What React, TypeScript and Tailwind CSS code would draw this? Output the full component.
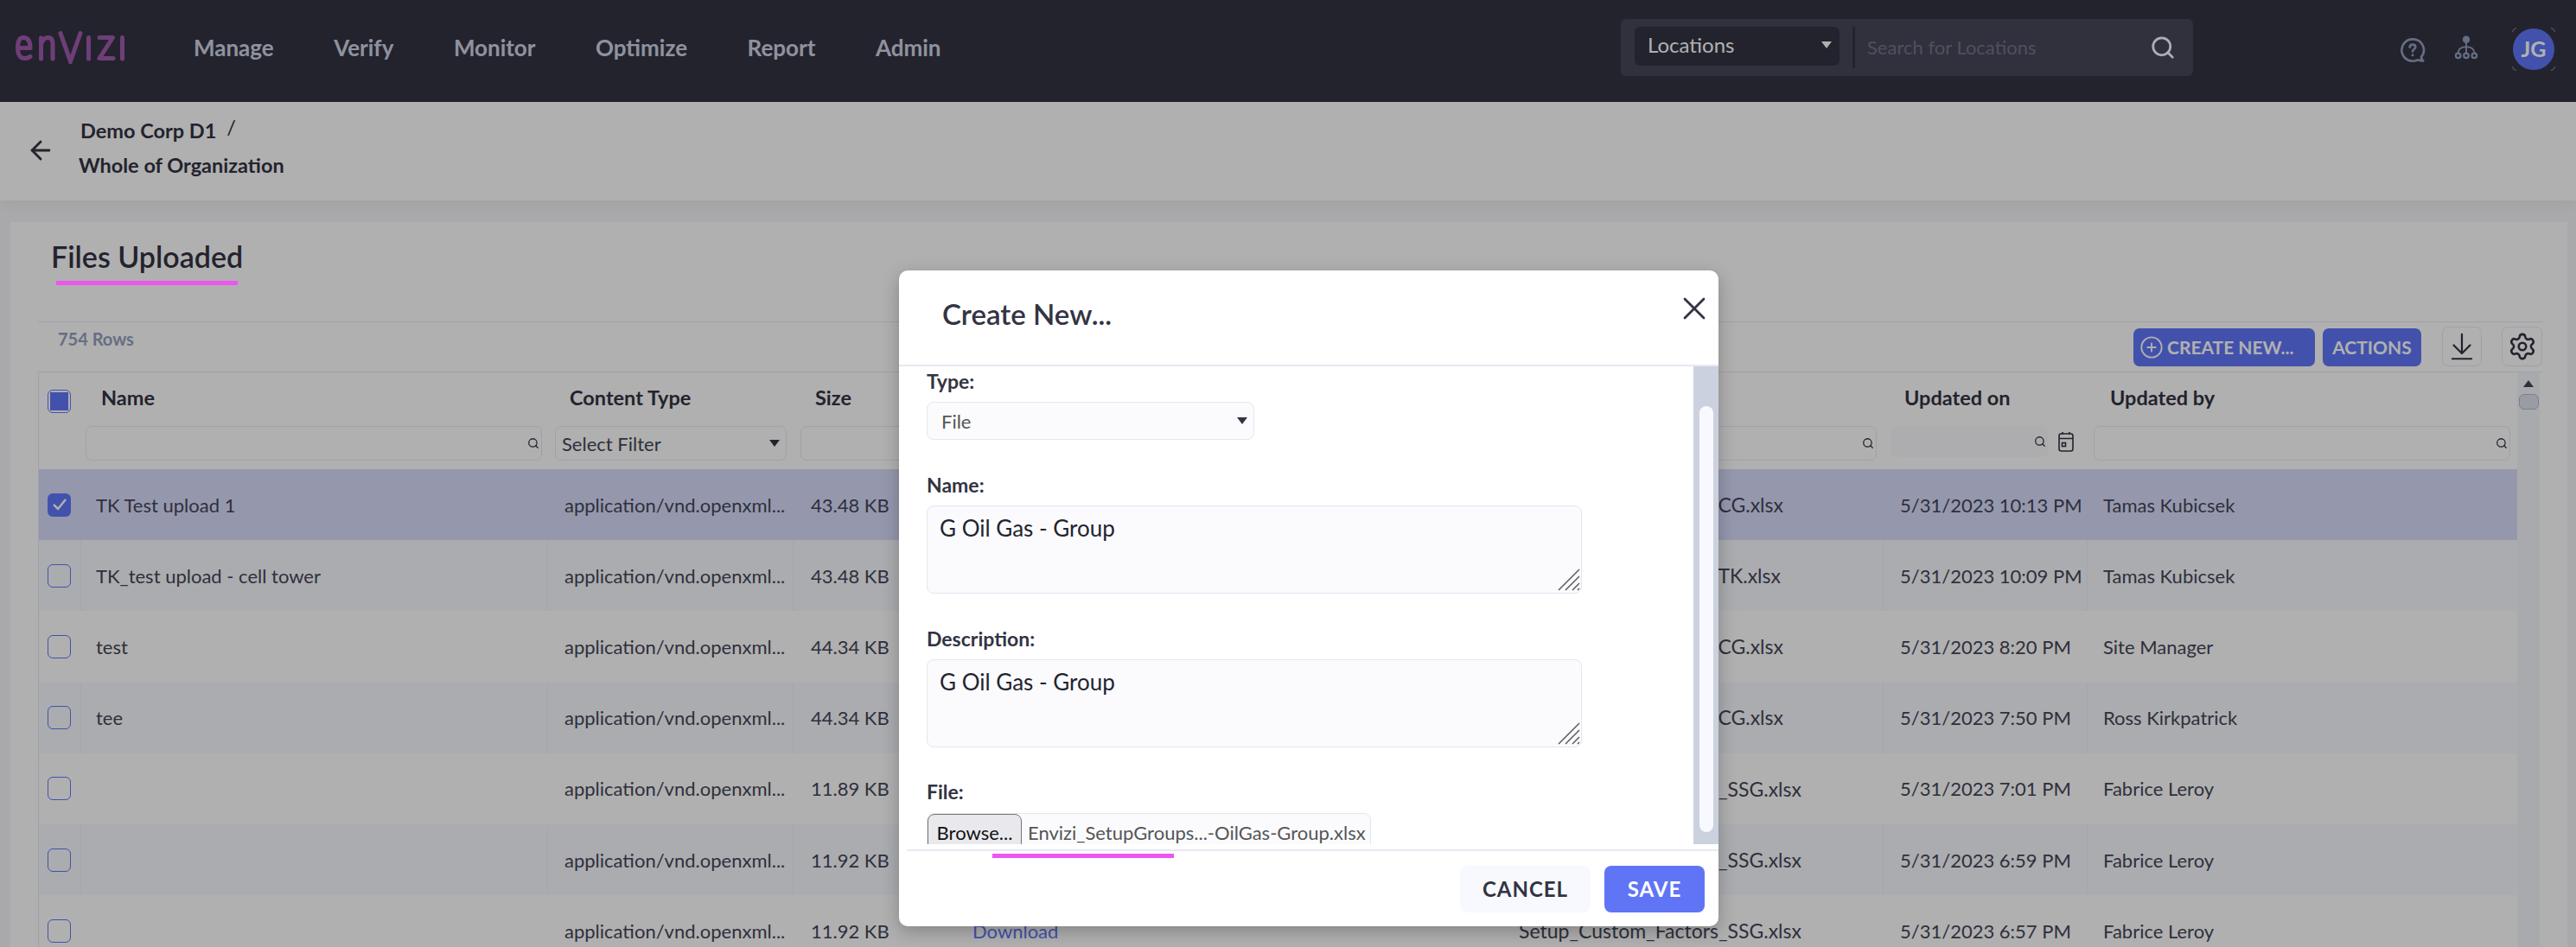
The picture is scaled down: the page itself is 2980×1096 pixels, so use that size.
import React from 'react';
import { ArrowDownToLine, ArrowLeft, CirclePlus, Search, Settings, X } from 'lucide-react';

const cols = 'grid grid-cols-[49px_540px_284px_193px_631px_437px_236px_498px]';

const rows = [
  { name: 'TK Test upload 1', size: '43.48 KB', file: 'Setup_Groups_OilGas_CG.xlsx', on: '5/31/2023 10:13 PM', by: 'Tamas Kubicsek', selected: true },
  { name: 'TK_test upload - cell tower', size: '43.48 KB', file: 'Setup_Groups_OilGas_TK.xlsx', on: '5/31/2023 10:09 PM', by: 'Tamas Kubicsek' },
  { name: 'test', size: '44.34 KB', file: 'Setup_Groups_OilGas_CG.xlsx', on: '5/31/2023 8:20 PM', by: 'Site Manager' },
  { name: 'tee', size: '44.34 KB', file: 'Setup_Groups_OilGas_CG.xlsx', on: '5/31/2023 7:50 PM', by: 'Ross Kirkpatrick' },
  { name: '', size: '11.89 KB', file: 'Setup_Custom_Factors_SSG.xlsx', on: '5/31/2023 7:01 PM', by: 'Fabrice Leroy' },
  { name: '', size: '11.92 KB', file: 'Setup_Custom_Factors_SSG.xlsx', on: '5/31/2023 6:59 PM', by: 'Fabrice Leroy' },
  { name: '', size: '11.92 KB', file: 'Setup_Custom_Factors_SSG.xlsx', on: '5/31/2023 6:57 PM', by: 'Fabrice Leroy' },
];

function Logo() {
  return (
    <svg className="mb-[8px]" width="127" height="38" viewBox="0 0 127 38" fill="none" stroke="#a15bae" strokeWidth="5" strokeLinecap="round" strokeLinejoin="round">
      <path d="M2.500 19.500H17c0-8-3-12-8-12S2.500 12 2.500 19.500s3 12 8 12c3 0 5-.8 6.500-2" />
      <path d="M29.500 32V8M29.500 15c2-5 5-7.500 8-7.500 4 0 5.500 3 5.500 7V32" />
      <path d="M52 2.500L63.500 35 75 2.500" strokeLinecap="round" strokeLinejoin="miter" />
      <path d="M84.500 7.500V32" />
      <path d="M97 7.500h15.500L97 31.500h16" />
      <path d="M123.500 7.500V32" />
    </svg>
  );
}

function HelpIcon() {
  return (
    <svg className="mb-[3px]" width="30" height="30" viewBox="0 0 32 32" fill="none" stroke="#94a0c0" strokeWidth="2.800">
      <path d="M16 2.500a13.500 13.500 0 1 0 6 25.600c2 .6 5 1.400 7 1.200-1-1-2.200-2.600-2.400-4.600A13.500 13.500 0 0 0 16 2.500z" strokeLinejoin="round" />
      <path d="M12.500 12.500c0-2 1.500-3.300 3.500-3.300s3.500 1.300 3.500 3.100c0 2.600-3.500 2.800-3.500 5.400" strokeLinecap="round" />
      <circle cx="16" cy="22" r="1.600" fill="#94a0c0" stroke="none" />
    </svg>
  );
}

function HierarchyIcon() {
  return (
    <svg className="mb-[8px]" width="28" height="28" viewBox="0 0 30 30" fill="none" stroke="#94a0c0" strokeWidth="2">
      <circle cx="15" cy="5" r="4.500" fill="#94a0c0" stroke="none" />
      <path d="M15 8v15M5 22c0-5 4-8 10-8s10 3 10 8" />
      <circle cx="5" cy="25" r="3" fill="#333443" strokeWidth="2.400" />
      <circle cx="15" cy="25" r="3" fill="#333443" strokeWidth="2.400" />
      <circle cx="25" cy="25" r="3" fill="#333443" strokeWidth="2.400" />
    </svg>
  );
}

function CalendarIcon() {
  return (
    <svg width="18" height="24" viewBox="0 0 18 24" fill="none" stroke="#333443" strokeWidth="1.600">
      <rect x="1" y="3" width="16" height="20" rx="2.500" />
      <path d="M1 8.500h16M5 1v3M13 1v3" />
      <rect x="4.500" y="13.500" width="4" height="4" />
    </svg>
  );
}

function ResizeHandle() {
  return (
    <svg className="absolute right-[2px] bottom-[3px]" width="26" height="26" viewBox="0 0 26 26" stroke="#5a5a5a" strokeWidth="1.500">
      <path d="M1 25L25 1M9 25L25 9M17 25l8-8M23 25l2-2" />
    </svg>
  );
}

function Caret({ className }: { className: string }) {
  return (
    <svg className={className} width="12" height="8" viewBox="0 0 12 8">
      <path d="M0 0h12L6 8z" fill="currentColor" />
    </svg>
  );
}

function Checkbox({ checked, partial }: { checked?: boolean; partial?: boolean }) {
  if (checked) {
    return (
      <div className="flex h-[27px] w-[27px] items-center justify-center rounded-[6px] bg-[#6077f9]">
        <svg width="18" height="16" viewBox="0 0 18 16" fill="none" stroke="#ffffff" strokeWidth="2.500">
          <path d="M2 8l5 5 9-11" />
        </svg>
      </div>
    );
  }
  return (
    <div className="flex h-[27px] w-[27px] items-center justify-center rounded-[6px] border border-[#6077f9]">
      {partial && <div className="h-[21px] w-[21px] bg-[#6077f9]" />}
    </div>
  );
}

function FilterInput({ className }: { className: string }) {
  return (
    <div className={`flex h-[40px] items-center justify-end rounded-[7px] border border-[#e6e9f8] pr-[2px] ${className}`}>
      <Search size={14} color="#333443" strokeWidth={2.200} />
    </div>
  );
}

function Table() {
  return (
    <div className="flex border-t border-[#e6e9f8] text-[22px] text-[#444658]">
      <div className="w-[2868px] border-l border-[#e6e9f8]">
        <div className={`${cols} h-[112px] text-[23.500px] font-bold text-[#333443]`}>
          <div className="pt-[20px] pl-[10px]">
            <Checkbox partial />
          </div>
          <HeaderCell label="Name" pad="pl-[23px]">
            <FilterInput className="ml-[5px] mr-[7px]" />
          </HeaderCell>
          <HeaderCell label="Content Type" pad="pl-[25px]">
            <div className="mx-[8px] flex h-[40px] items-center justify-between rounded-[7px] border border-[#e6e9f8] px-[7px] text-[22px] font-normal text-[#444658]">
              Select Filter
              <Caret className="text-[#333443]" />
            </div>
          </HeaderCell>
          <HeaderCell label="Size" pad="pl-[25px]">
            <FilterInput className="ml-[8px] mr-[8px]" />
          </HeaderCell>
          <HeaderCell label="" pad="">
            <FilterInput className="mx-[8px]" />
          </HeaderCell>
          <HeaderCell label="" pad="">
            <FilterInput className="mx-[8px]" />
          </HeaderCell>
          <HeaderCell label="Updated on" pad="pl-[24px]">
            <div className="ml-[8px] flex items-center">
              <div className="flex h-[36px] w-[182px] items-center justify-end rounded-[7px] bg-[#f8f9fe]/60 pr-[2px]">
                <Search size={14} color="#333443" strokeWidth={2.200} />
              </div>
              <div className="ml-[12px]">
                <CalendarIcon />
              </div>
            </div>
          </HeaderCell>
          <HeaderCell label="Updated by" pad="pl-[26px]">
            <FilterInput className="ml-[7px] mr-[9px]" />
          </HeaderCell>
        </div>
        {rows.map((row, i) => (
          <div
            key={i}
            className={`${cols} h-[82.200px] items-stretch ${
              row.selected ? 'bg-[#d8dcfb]' : i % 2 === 1 ? 'bg-[#f8f9fe]' : 'bg-white'
            }`}
          >
            <div className={`flex items-center pl-[10px] ${i % 2 === 1 ? 'border-r border-[#f0f1f8]' : ''}`}>
              <Checkbox checked={row.selected} />
            </div>
            <Cell bordered={i % 2 === 1} pad="pl-[17px]">{row.name}</Cell>
            <Cell bordered={i % 2 === 1} pad="pl-[19px]">application/vnd.openxml...</Cell>
            <Cell pad="pl-[20px]">{row.size}</Cell>
            <Cell pad="pl-[14px]">
              {i === 6 ? <span className="text-[#6077f9]">Download</span> : ''}
            </Cell>
            <Cell bordered={i % 2 === 1} pad="pl-[15px] text-[23px]">{row.file}</Cell>
            <Cell bordered={i % 2 === 1} pad="pl-[19px]">{row.on}</Cell>
            <Cell pad="pl-[18px]">{row.by}</Cell>
          </div>
        ))}
      </div>
      <div className="flex w-[26px] flex-col items-center bg-[#f5f6fc] pt-[9px]">
        <Caret className="rotate-180 text-[#444658]" />
        <div className="mt-[8px] h-[18px] w-[23px] rounded-[6px] border border-[#b4b8ca] bg-[#dfe2f0]" />
      </div>
    </div>
  );
}

function HeaderCell({ label, pad, children }: { label: string; pad: string; children: React.ReactNode }) {
  return (
    <div className="flex flex-col">
      <div className={`flex h-[62px] items-center pb-[2px] ${pad}`}>{label}</div>
      {children}
    </div>
  );
}

function Cell({ children, pad, bordered }: { children: React.ReactNode; pad: string; bordered?: boolean }) {
  return (
    <div className={`flex items-center whitespace-nowrap ${pad} ${bordered ? 'border-r border-[#f0f1f8]' : ''}`}>
      {children}
    </div>
  );
}

function Field({ label, top, children }: { label: string; top: string; children: React.ReactNode }) {
  return (
    <div className={top}>
      <div className="h-[26px] text-[23px] leading-[26px] font-bold text-[#333443]">{label}</div>
      {children}
    </div>
  );
}

function TextBox() {
  return (
    <div className="relative mt-[11px] h-[102px] w-[758px]">
      <textarea
        readOnly
        defaultValue="G Oil Gas - Group"
        className="h-full w-full resize-none rounded-[8px] border border-[#e4e6f0] bg-[#fbfbfe] px-[14px] py-[9px] text-[26px] leading-[32px] text-[#23242e] outline-none"
      />
      <ResizeHandle />
    </div>
  );
}

function Modal() {
  return (
    <div className="absolute top-[313px] left-[1040px] flex h-[759px] w-[948px] flex-col rounded-[10px] bg-white shadow-[0_6px_20px_rgba(0,0,0,0.25)]">
      <div className="flex h-[111px] shrink-0 items-start justify-between border-b-2 border-[#e8e9f2] pt-[22px] pr-[6px] pl-[50px]">
        <div className="mt-[8px] text-[33px] leading-[40px] font-semibold text-[#333443]">Create New...</div>
        <X size={44} color="#333443" strokeWidth={1.500} />
      </div>
      <div className="flex h-[553px] shrink-0">
        <div className="flex-1 overflow-hidden pt-[4px] pl-[32px]">
          <Field label="Type:" top="">
            <div className="mt-[11px] flex h-[44px] w-[379px] items-center justify-between rounded-[8px] border border-[#e4e6f0] bg-[#fbfbfe] pr-[7px] pl-[16px] text-[22px] text-[#555]">
              File
              <Caret className="text-[#333443]" />
            </div>
          </Field>
          <Field label="Name:" top="mt-[39px]">
            <TextBox />
          </Field>
          <Field label="Description:" top="mt-[39px]">
            <TextBox />
          </Field>
          <Field label="File:" top="mt-[38px]">
            <div className="mt-[12px] flex h-[44px] w-[514px] items-center rounded-[8px] border border-[#e4e6f0] bg-[#fbfbfe] text-[22px]">
              <div className="flex h-full w-[109px] items-center justify-center rounded-[8px] border border-[#777] bg-[#e9e9ed] text-[#111]">Browse...</div>
              <span className="ml-[7px] whitespace-nowrap text-[#555]">Envizi_SetupGroups...-OilGas-Group.xlsx</span>
            </div>
          </Field>
        </div>
        <div className="w-[29px] bg-[#ccd1df] pt-[46px] pl-[7px]">
          <div className="h-[493px] w-[16px] rounded-[8px] bg-[#f8f9fe]" />
        </div>
      </div>
      <div className="mt-[6px] ml-[9px] flex h-[89px] items-start justify-end gap-[16px] border-t-2 border-[#e8e9f2] pt-[17px] pr-[16px] text-[24px] font-bold tracking-[1px]">
        <button className="h-[54px] w-[151px] rounded-[8px] bg-[#f8f9fe] text-[#333443]">CANCEL</button>
        <button className="h-[54px] w-[116px] rounded-[8px] bg-[#6075f5] text-white">SAVE</button>
      </div>
    </div>
  );
}

export default function App() {
  return (
    <div className="relative flex h-screen flex-col overflow-hidden bg-[#f5f5f9] font-[Lato,sans-serif] text-[22px]">
      <header className="flex h-[118px] shrink-0 items-center bg-[#333443] pr-[25px] pl-[18px]">
        <Logo />
        <nav className="mb-[8px] ml-[79px] flex gap-[69.500px] text-[26px] font-bold text-[#d0d4e2]">
          <span>Manage</span>
          <span>Verify</span>
          <span>Monitor</span>
          <span>Optimize</span>
          <span>Report</span>
          <span>Admin</span>
        </nav>
        <div className="mt-[22px] ml-auto flex h-[66px] w-[662px] items-center self-start rounded-[6px] bg-[#464859] pl-[16px]">
          <div className="mb-[3px] flex h-[45px] w-[237px] items-center justify-between rounded-[6px] bg-[#333443] pr-[9px] pb-[3px] pl-[15px] text-[24px] text-[#ffffff]">
            Locations
            <Caret className="text-white" />
          </div>
          <div className="ml-[15px] h-[48px] w-[3px] bg-[#333443]" />
          <div className="ml-[14px] mb-[2px] text-[22px] text-[#72758a]">Search for Locations</div>
          <Search className="mr-[20px] mb-[1px] ml-auto" size={30} color="#fbfcff" strokeWidth={2.200} />
        </div>
        <div className="ml-[239px] flex"><HelpIcon /></div>
        <div className="ml-[33px] flex"><HierarchyIcon /></div>
        <div className="relative mb-[4px] ml-[40px] flex h-[48px] w-[48px] items-center justify-center rounded-full bg-[#6077f9] text-[25px] font-bold text-white">
          JG
          <svg className="absolute -top-[1px] -left-[1px]" width="50" height="50" viewBox="0 0 50 50" fill="none" stroke="#8a8da0" strokeWidth="1">
            <path d="M.5 5Q1 1 5 .5M45 .5Q49 1 49.500 5M49.500 45Q49 49 45 49.500M5 49.500Q1 49 .5 45" />
          </svg>
        </div>
      </header>

      <div className="relative flex h-[114px] shrink-0 items-center bg-white pl-[30px] shadow-[0_2px_16px_rgba(0,0,0,0.06)]">
        <ArrowLeft className="mb-[2px]" size={34} color="#333443" strokeWidth={2} />
        <div className="mb-[8px] ml-[27px] text-[23.500px] font-bold text-[#333443]">
          <div className="ml-[2px] flex h-[34px] items-center">
            Demo Corp D1
            <span className="mb-[8px] ml-[12px] font-normal">/</span>
          </div>
          <div className="mt-[5px] h-[34px]">Whole of Organization</div>
        </div>
      </div>

      <main className="flex-1 pt-[25px] pr-[10px] pl-[12px]">
        <div className="h-full bg-white pr-[29px] pl-[32px]">
          <div className="flex h-[115px] items-start pt-[18px] pl-[15px]">
            <h1 className="text-[34px] leading-[44px] font-semibold text-[#333443]">Files Uploaded</h1>
          </div>
          <div className="flex h-[58px] items-start justify-between border-t border-[#e6e9f8]">
            <div className="mt-[4px] ml-[23px] text-[20px] font-bold text-[#94a0c0]">754 Rows</div>
            <div className="flex items-start">
              <button className="mt-[7px] flex h-[44px] w-[210px] items-center gap-[4px] rounded-[7px] bg-[#6077f9] pl-[7px] text-[21px] font-bold text-white">
                <CirclePlus size={28} strokeWidth={1.600} />
                CREATE NEW...
              </button>
              <button className="mt-[7px] ml-[9px] h-[44px] w-[114px] rounded-[7px] bg-[#6077f9] text-[21px] font-bold text-white">ACTIONS</button>
              <div className="mt-[5px] ml-[24px] flex h-[46px] w-[46px] items-center justify-center rounded-[7px] border border-[#e6e9f8]">
                <ArrowDownToLine size={38} color="#333443" strokeWidth={1.400} />
              </div>
              <div className="mt-[5px] ml-[23px] flex h-[46px] w-[47px] items-center justify-center rounded-[7px] border border-[#e6e9f8]">
                <Settings size={34} color="#333443" strokeWidth={1.800} />
              </div>
            </div>
          </div>
          <Table />
        </div>
      </main>

      <div className="absolute inset-0 bg-black/[0.31]" />
      <Modal />

      {/* pink markup drawn on top of the screenshot */}
      <div className="absolute top-[325px] left-[65px] h-[5px] w-[210px] bg-[#ee55f0]" />
      <div className="absolute top-[988px] left-[1148px] h-[5px] w-[210px] bg-[#ee55f0]" />
    </div>
  );
}
